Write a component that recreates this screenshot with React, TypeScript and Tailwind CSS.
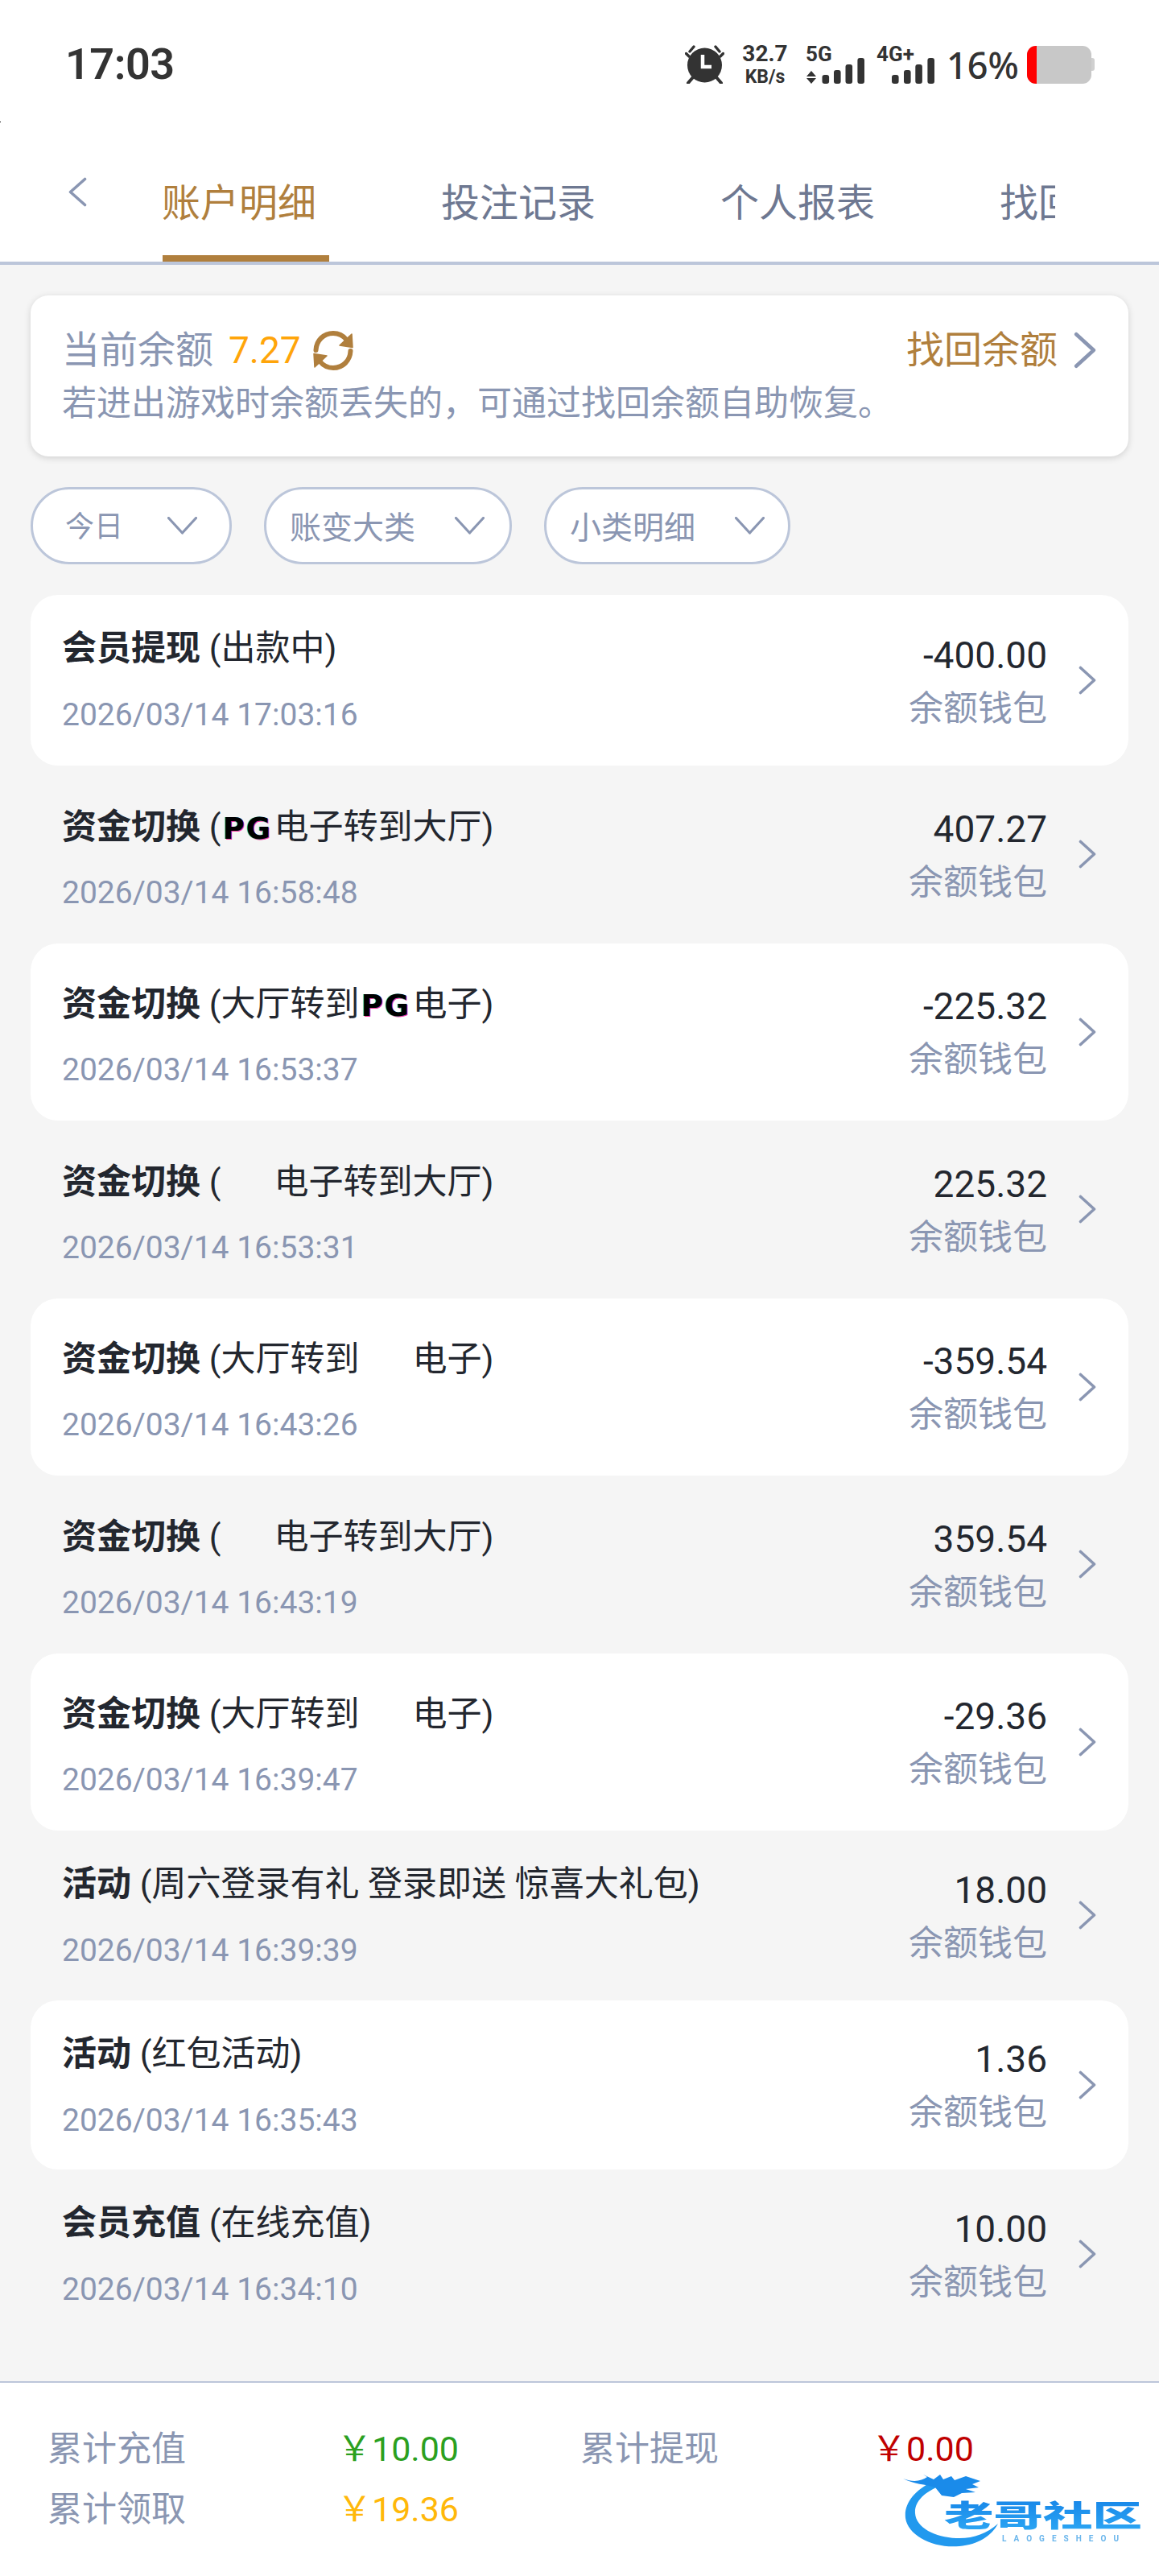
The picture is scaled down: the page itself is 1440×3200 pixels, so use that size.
import React from "react";

const FONT = "font-['Roboto','Noto_Sans_CJK_SC',sans-serif]";

type Row = {
  title: string;
  before?: string;
  after?: string;
  emblem?: "pg" | "blank";
  date: string;
  amount: string;
  white: boolean;
  size: string;
  pad: string;
  gap: string;
};

const TALL = "h-[220.5px]";
const SHORT = "h-[210.5px]";
const GT = "mt-[29px]";
const GS = "mt-[30px]";

const rows: Row[] = [
  { title: "会员提现", before: "(出款中)", date: "2026/03/14 17:03:16", amount: "-400.00", white: true, size: "h-[212px]", pad: "pt-[36px]", gap: GS },
  { title: "资金切换", before: "(", emblem: "pg", after: "电子转到大厅)", date: "2026/03/14 16:58:48", amount: "407.27", white: false, size: TALL, pad: "pt-[46px]", gap: GT },
  { title: "资金切换", before: "(大厅转到", emblem: "pg", after: "电子)", date: "2026/03/14 16:53:37", amount: "-225.32", white: true, size: TALL, pad: "pt-[45px]", gap: GT },
  { title: "资金切换", before: "(", emblem: "blank", after: "电子转到大厅)", date: "2026/03/14 16:53:31", amount: "225.32", white: false, size: TALL, pad: "pt-[46px]", gap: GT },
  { title: "资金切换", before: "(大厅转到", emblem: "blank", after: "电子)", date: "2026/03/14 16:43:26", amount: "-359.54", white: true, size: TALL, pad: "pt-[45px]", gap: GT },
  { title: "资金切换", before: "(", emblem: "blank", after: "电子转到大厅)", date: "2026/03/14 16:43:19", amount: "359.54", white: false, size: TALL, pad: "pt-[46px]", gap: GT },
  { title: "资金切换", before: "(大厅转到", emblem: "blank", after: "电子)", date: "2026/03/14 16:39:47", amount: "-29.36", white: true, size: TALL, pad: "pt-[45px]", gap: GT },
  { title: "活动", before: "(周六登录有礼 登录即送 惊喜大礼包)", date: "2026/03/14 16:39:39", amount: "18.00", white: false, size: SHORT, pad: "pt-[36px]", gap: GS },
  { title: "活动", before: "(红包活动)", date: "2026/03/14 16:35:43", amount: "1.36", white: true, size: SHORT, pad: "pt-[36px]", gap: GS },
  { title: "会员充值", before: "(在线充值)", date: "2026/03/14 16:34:10", amount: "10.00", white: false, size: SHORT, pad: "pt-[36px]", gap: GS },
];

function Alarm() {
  return (
    <svg width="49" height="48" viewBox="0 0 49 48" className="shrink-0">
      <circle cx="24.5" cy="25" r="21.5" fill="#333" />
      <path d="M22 12V27H33" fill="none" stroke="#fff" strokeWidth="4.5" />
      <path d="M1.5 10.5L5 14M11 2L6 8M47.5 10.5L44 14M38 2L43 8" fill="none" stroke="#333" strokeWidth="3.4" strokeLinecap="round" />
      <path d="M4 47L10 40M45 47L39 40" fill="none" stroke="#333" strokeWidth="4" strokeLinecap="round" />
    </svg>
  );
}

function Bars({ xs }: { xs: number[] }) {
  const tops = [37, 31, 24, 16];
  return (
    <>
      {xs.map((x, i) => (
        <rect key={x} x={x} y={tops[i]} width="8.6" height={48 - tops[i]} rx="3" fill="#333" />
      ))}
    </>
  );
}

function Net5G() {
  return (
    <svg width="73" height="48" viewBox="0 0 73 48" className="shrink-0 overflow-visible">
      <text x="0" y="20" fontFamily="Roboto" fontWeight="700" fontSize="26" fill="#333">5G</text>
      <path d="M7 32L13 39H1ZM1 41H13L7 48Z" fill="#333" />
      <Bars xs={[20.5, 35, 49.5, 64.4]} />
    </svg>
  );
}

function Net4G() {
  return (
    <svg width="72" height="48" viewBox="0 0 72 48" className="shrink-0 overflow-visible">
      <text x="0" y="20" fontFamily="Roboto" fontWeight="700" fontSize="26" fill="#333">4G+</text>
      <Bars xs={[19, 34, 48.3, 63.4]} />
    </svg>
  );
}

function Chevron({ className, strokeWidth = 3.6 }: { className: string; strokeWidth?: number }) {
  return (
    <svg viewBox="0 0 22 36" className={className}>
      <path d="M2.5 2.5L19.5 18L2.5 33.5" fill="none" stroke="#8a96b2" strokeWidth={strokeWidth} strokeLinecap="round" strokeLinejoin="round" />
    </svg>
  );
}

function ChevronDown({ className }: { className: string }) {
  return (
    <svg viewBox="0 0 37 22" className={className}>
      <path d="M1.5 1.5L18.5 20L35.5 1.5" fill="none" stroke="#8a96b2" strokeWidth="3.2" strokeLinecap="round" strokeLinejoin="round" />
    </svg>
  );
}

function Refresh() {
  const half = (
    <>
      <path d="M4.5 25C5 13 14 4 26 4C33 4 38.5 7 42.5 12" fill="none" stroke="#b07f3d" strokeWidth="6" strokeLinecap="round" />
      <path d="M49 5L50 21.5L34 19Z" fill="#b07f3d" stroke="#b07f3d" strokeWidth="1.5" strokeLinejoin="round" />
    </>
  );
  return (
    <svg width="52" height="51" viewBox="0 0 52 51" className="shrink-0">
      {half}
      <g transform="rotate(180 26 25.5)">{half}</g>
    </svg>
  );
}

function Emblem({ kind }: { kind: "pg" | "blank" }) {
  return (
    <span className="inline-block w-[66px] whitespace-nowrap text-center align-baseline font-['DejaVu_Sans',sans-serif] text-[37px] font-bold leading-[30px] tracking-[2px] text-black [text-shadow:-1px_0_0_#19d3e0,1px_1px_0_#f0349a]">
      {kind === "pg" ? "PG" : "\u00a0"}
    </span>
  );
}

function Logo() {
  return (
    <svg width="340" height="130" viewBox="0 0 340 130" className="absolute left-[1100px] top-[90px] overflow-visible blur-[0.7px]">
      <defs>
        <linearGradient id="logoFill" x1="0" y1="0" x2="0" y2="1">
          <stop offset="0" stopColor="#1480e6" />
          <stop offset="1" stopColor="#2eaaf5" />
        </linearGradient>
      </defs>
      <path d="M58 33C36 44 23 60 25 78C28 100 60 116 92 113C115 111 132 100 140 85C125 98 108 104 88 103C62 102 38 90 37 72C36 58 48 46 68 38Z" fill="#2299ee" />
      <path d="M22 29C35 34 45 32 52 27L47 24L60 30L68 24L72 30L82 26L86 31L100 26L118 32L108 36L116 40L100 42L112 46L95 47L85 52L70 50L62 40C50 36 35 36 22 29Z" fill="#1a8bea" />
      <text x="73" y="89" textLength="246" lengthAdjust="spacingAndGlyphs" fontFamily="Noto Sans CJK SC" fontWeight="900" fontSize="37" fill="url(#logoFill)">老哥社区</text>
      <text x="145" y="107" textLength="145" fontFamily="Roboto" fontWeight="700" fontSize="10" fill="#6bb6ec">LAOGESHEOU</text>
    </svg>
  );
}

export default function App() {
  return (
    <div className={`relative flex h-[3200px] w-[1440px] flex-col overflow-hidden bg-[#f5f5f5] ${FONT}`}>
      <div className="bg-white">
        <div className="relative flex h-[160px] items-center pl-[81px] pr-[80px]">
          <span className="absolute left-0 top-[151px] h-[1px] w-[1px] bg-black" />
          <span className="text-[54px] font-semibold leading-none tracking-[-0.5px] text-[#333]">17:03</span>
          <div className="ml-auto flex items-center">
            <Alarm />
            <div className="ml-[23px] flex w-[55px] shrink-0 flex-col items-center font-bold text-[#333]">
              <span className="text-[28px] leading-[28px]">32.7</span>
              <span className="mt-[3px] text-[23px] leading-[24px]">KB/s</span>
            </div>
            <div className="ml-[23px]"><Net5G /></div>
            <div className="ml-[15px]"><Net4G /></div>
            <span className="ml-[15px] w-[84px] shrink-0 whitespace-nowrap font-['Noto_Sans',sans-serif] text-[45px] font-medium leading-none text-[#333]">16%</span>
            <div className="ml-[16px] flex items-center">
              <div className="flex h-[47px] w-[80px] overflow-hidden rounded-[11px] bg-[#c8c8c8]">
                <div className="h-full w-[12px] bg-[#ff0000]" />
              </div>
              <div className="h-[16px] w-[4px] rounded-r-[3px] bg-[#d0d0d0]" />
            </div>
          </div>
        </div>
        <div className="flex h-[169px] border-b-4 border-[#bcc6da] pl-[85px]">
          <svg viewBox="0 0 23 37" className="mt-[60px] h-[37px] w-[23px] shrink-0">
            <path d="M20.5 2.5L2.5 18.5L20.5 34.5" fill="none" stroke="#8a96b2" strokeWidth="3.6" strokeLinecap="round" strokeLinejoin="round" />
          </svg>
          <div className="ml-[93px] flex h-full w-[1110px] overflow-hidden text-[48px] leading-[60px]">
            <div className="relative mr-[140px] h-full w-[207px] shrink-0 pt-[63px] text-[#b07f3d]">
              账户明细
              <span className="absolute bottom-0 left-[1px] h-[8px] w-[207px] bg-[#b07f3d]" />
            </div>
            <div className="mr-[140px] h-full w-[207px] shrink-0 pt-[63px] text-[#6e7891]">投注记录</div>
            <div className="mr-[140px] h-full w-[207px] shrink-0 pt-[63px] text-[#6e7891]">个人报表</div>
            <div className="mr-[140px] h-full w-[207px] shrink-0 whitespace-nowrap pt-[63px] text-[#6e7891]">找回余额</div>
          </div>
        </div>
      </div>

      <div className="px-[38px] pt-[38px]">
        <div className="flex h-[200px] flex-col rounded-[22px] bg-white pl-[39px] pr-[40px] pt-[40px] shadow-[0_2px_8px_rgba(0,0,0,0.15)]">
          <div className="flex h-[56px] items-center">
            <span className="text-[47px] leading-[56px] text-[#8a96b2]">当前余额</span>
            <span className="ml-[19px] text-[46px] leading-[56px] text-[#ffa50a]">7.27</span>
            <span className="ml-[14px]"><Refresh /></span>
            <span className="ml-auto text-[47px] leading-[56px] text-[#b07f3d]">找回余额</span>
            <Chevron className="ml-[20px] h-[46px] w-[28px] shrink-0" />
          </div>
          <div className="mt-[12px] text-[43px] leading-[52px] text-[#8a96b2]">若进出游戏时余额丢失的，可通过找回余额自助恢复。</div>
        </div>

        <div className="mt-[38px] flex gap-[40px] text-[#8a96b2]">
          <div className="flex h-[96px] w-[250px] items-center justify-between rounded-full border-[3px] border-[#bcc6da] bg-white pl-[40px] pr-[40px]">
            <span className="pt-[3px] text-[36px] leading-none">今日</span>
            <ChevronDown className="h-[22px] w-[37px]" />
          </div>
          <div className="flex h-[96px] w-[308px] items-center justify-between rounded-full border-[3px] border-[#bcc6da] bg-white pl-[29px] pr-[31px]">
            <span className="pt-[6px] text-[39px] leading-none">账变大类</span>
            <ChevronDown className="h-[22px] w-[37px]" />
          </div>
          <div className="flex h-[96px] w-[306px] items-center justify-between rounded-full border-[3px] border-[#bcc6da] bg-white pl-[29px] pr-[29px]">
            <span className="pt-[6px] text-[39px] leading-none">小类明细</span>
            <ChevronDown className="h-[22px] w-[37px]" />
          </div>
        </div>

        <div className="mt-[38px]">
          {rows.map((r) => (
            <div key={r.date} className={`flex items-center rounded-[34px] pl-[39px] pr-[40px] ${r.size} ${r.white ? "bg-white" : ""}`}>
              <div className={`self-start ${r.pad}`}>
                <div className="h-[60px] whitespace-nowrap text-[43px] leading-[60px] text-[#23272f]">
                  <span className="font-bold">{r.title}</span> {r.before}
                  {r.emblem ? <Emblem kind={r.emblem} /> : null}
                  {r.after}
                </div>
                <div className={`${r.gap} text-[39px] leading-[46px] text-[#8a96b2]`}>{r.date}</div>
              </div>
              <div className="ml-auto flex flex-col items-end pt-[3px]">
                <span className="text-[46px] leading-[56px] text-[#23272f]">{r.amount}</span>
                <span className="mt-[10px] text-[43px] leading-[56px] text-[#8a96b2]">余额钱包</span>
              </div>
              <Chevron className="ml-[39px] h-[36px] w-[22px] shrink-0" />
            </div>
          ))}
        </div>
      </div>

      <div className="relative mt-auto h-[242px] border-t-2 border-[#bcc6da] bg-white pl-[59px] pt-[45px]">
        <div className="grid grid-cols-[360px_302px_362px_1fr] text-[43px] leading-[75px] text-[#8a96b2]">
          <span>累计充值</span>
          <span className="text-[#2ba01f]">￥10.00</span>
          <span>累计提现</span>
          <span className="text-[#c00000]">￥0.00</span>
          <span>累计领取</span>
          <span className="text-[#ffb80a]">￥19.36</span>
        </div>
        <Logo />
      </div>
    </div>
  );
}
